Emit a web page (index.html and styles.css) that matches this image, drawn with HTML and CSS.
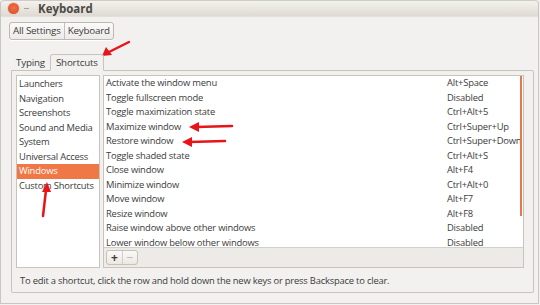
FILE: index.html
```html
<!DOCTYPE html>
<html>
<head>
<meta charset="utf-8">
<link rel="stylesheet" href="styles.css">
</head>
<body>
<div class="window">
  <div class="titlebar">
    <span class="close"></span>
    <span class="minimize"></span>
    <span class="title">Keyboard</span>
  </div>
  <div class="toolbar">
    <div class="seg">
      <span class="seg-btn">All Settings</span>
      <span class="seg-btn">Keyboard</span>
    </div>
  </div>
  <div class="tabs">
    <span class="tab">Typing</span>
    <span class="tab active">Shortcuts</span>
  </div>
  <div class="page">
    <div class="panes">
      <div class="cats">
        <div class="cat">Launchers</div>
        <div class="cat">Navigation</div>
        <div class="cat">Screenshots</div>
        <div class="cat">Sound and Media</div>
        <div class="cat">System</div>
        <div class="cat">Universal Access</div>
        <div class="cat selected">Windows</div>
        <div class="cat">Custom Shortcuts</div>
      </div>
      <div class="right">
        <div class="list">
          <div class="row"><span class="name">Activate the window menu</span><span class="key">Alt+Space</span></div>
          <div class="row"><span class="name">Toggle fullscreen mode</span><span class="key">Disabled</span></div>
          <div class="row"><span class="name">Toggle maximization state</span><span class="key">Ctrl+Alt+5</span></div>
          <div class="row"><span class="name">Maximize window</span><span class="key">Ctrl+Super+Up</span></div>
          <div class="row"><span class="name">Restore window</span><span class="key">Ctrl+Super+Down</span></div>
          <div class="row"><span class="name">Toggle shaded state</span><span class="key">Ctrl+Alt+S</span></div>
          <div class="row"><span class="name">Close window</span><span class="key">Alt+F4</span></div>
          <div class="row"><span class="name">Minimize window</span><span class="key">Ctrl+Alt+0</span></div>
          <div class="row"><span class="name">Move window</span><span class="key">Alt+F7</span></div>
          <div class="row"><span class="name">Resize window</span><span class="key">Alt+F8</span></div>
          <div class="row"><span class="name">Raise window above other windows</span><span class="key">Disabled</span></div>
          <div class="row"><span class="name">Lower window below other windows</span><span class="key">Disabled</span></div>
          <div class="scroll"></div>
        </div>
        <div class="listbar">
          <div class="pm">
            <span class="pm-btn plus">+</span>
            <span class="pm-btn minus">&minus;</span>
          </div>
        </div>
      </div>
    </div>
    <div class="hint">To edit a shortcut, click the row and hold down the new keys or press Backspace to clear.</div>
  </div>
</div>
<svg class="arrows" width="540" height="305" viewBox="0 0 540 305">
  <g stroke="#e8141a" stroke-width="2.5" fill="none" stroke-linecap="round">
    <line x1="129" y1="42" x2="109" y2="52"/>
    <line x1="232" y1="126" x2="196" y2="127"/>
    <line x1="225" y1="141" x2="189" y2="142"/>
    <line x1="43" y1="216" x2="46" y2="190"/>
  </g>
  <g fill="#e8141a">
    <path d="M102,56 L106,47 L112,55 Z"/>
    <path d="M189,127 L199,122 L199,132 Z"/>
    <path d="M182,142 L192,137 L192,147 Z"/>
    <path d="M47,182 L42,192 L51,192 Z"/>
  </g>
</svg>
</body>
</html>
```
FILE: styles.css
```css
* { box-sizing: border-box; }
html, body { margin: 0; padding: 0; }
body {
  width: 540px;
  height: 305px;
  overflow: hidden;
  background: #f2f1f0;
  font-family: "Open Sans", "Noto Sans", sans-serif;
  font-size: 9.4px;
  letter-spacing: -0.2px;
  color: #3c3c3c;
  position: relative;
}
.window {
  width: 539px;
  height: 304px;
  background: #f2f1f0;
  border: 1px solid #c9c6c0;
  border-top: none;
  border-radius: 4px 4px 0 0;
}
.titlebar {
  height: 17px;
  display: flex;
  align-items: center;
  background: linear-gradient(#f4f2ee, #dedad3);
  border-top: 1px solid #d0ccc4;
  border-radius: 4px 4px 0 0;
  border-bottom: 1px solid #e3e0da;
  padding-left: 7px;
}
.close {
  width: 11px;
  height: 11px;
  border-radius: 50%;
  background: radial-gradient(circle at 50% 45%, #f3704a 0%, #e35b2e 60%, #c8451e 100%);
  box-shadow: 0 0 0 1px #dcd5cb;
}
.minimize {
  width: 5px;
  height: 1px;
  background: #aaa59c;
  margin-left: 5px;
}
.title {
  margin-left: 9px;
  font-weight: bold;
  font-size: 11.5px;
  letter-spacing: 0;
  color: #4b4944;
}
.toolbar {
  padding: 5px 0 0 8px;
  height: 46px;
}
.seg {
  display: inline-flex;
  border: 1px solid #bdb9b1;
  border-radius: 3px;
  height: 18px;
  background: linear-gradient(#fbfaf9, #ecebe8);
  box-shadow: 0 1px 0 #fff;
}
.seg-btn {
  padding: 0 3px;
  line-height: 16px;
  font-size: 9.8px;
  color: #3c3c3c;
}
.seg-btn + .seg-btn { border-left: 1px solid #c4c0b8; }
.tabs {
  display: flex;
  align-items: flex-end;
  height: 26px;
  margin-top: -19px;
  padding-left: 10px;
  position: relative;
  z-index: 1;
}
.tab {
  padding: 0 5px;
  line-height: 15px;
  height: 15px;
  color: #3c3c3c;
  font-size: 9.8px;
}
.tab.active {
  height: 17px;
  line-height: 15px;
  border: 1px solid #c8c4bc;
  border-bottom: 1px solid #f2f1f0;
  border-radius: 3px 3px 0 0;
  background: #f2f1f0;
  margin-bottom: -1px;
}
.page {
  margin: 0 4px 0 10px;
  height: 223px;
  border: 1px solid #c8c4bc;
  border-radius: 0 2px 2px 2px;
  padding: 4px 9px 0 4px;
}
.panes {
  display: flex;
  gap: 3px;
  height: 193px;
}
.cats {
  width: 84px;
  background: #fff;
  border: 1px solid #c8c4bc;
  padding-top: 1px;
}
.cat {
  height: 14.5px;
  line-height: 14.5px;
  padding-left: 2px;
  white-space: nowrap;
  overflow: hidden;
}
.cat.selected {
  background: #f07746;
  color: #fff;
}
.right {
  flex: 1;
  display: flex;
  flex-direction: column;
  border: 1px solid #c8c4bc;
}
.list {
  height: 171px;
  background: #fff;
  overflow: hidden;
  position: relative;
}
.row {
  height: 14.5px;
  line-height: 14.5px;
  display: flex;
  white-space: nowrap;
  padding-left: 2px;
}
.name { width: 341px; }
.key { flex: 1; }
.scroll {
  position: absolute;
  right: 1px;
  top: 0;
  width: 2px;
  height: 140px;
  background: #e8784a;
}
.listbar {
  flex: 1;
  background: #edebe8;
  border-top: 1px solid #d3cfc8;
  padding: 2px 0 0 2px;
}
.pm {
  display: inline-flex;
  height: 15px;
  border: 1px solid #c6c2ba;
  border-radius: 3px;
  background: linear-gradient(#fbfaf9, #eae8e4);
}
.pm-btn {
  width: 15px;
  text-align: center;
  line-height: 13px;
  font-size: 12px;
  font-weight: bold;
  letter-spacing: 0;
  color: #3c3c3c;
}
.pm-btn.minus {
  color: #b5b1aa;
  border-left: 1px solid #d3cfc8;
  font-weight: normal;
}
.hint {
  padding: 6px 0 0 4px;
  white-space: nowrap;
}
.arrows {
  position: absolute;
  left: 0;
  top: 0;
  pointer-events: none;
}
```
